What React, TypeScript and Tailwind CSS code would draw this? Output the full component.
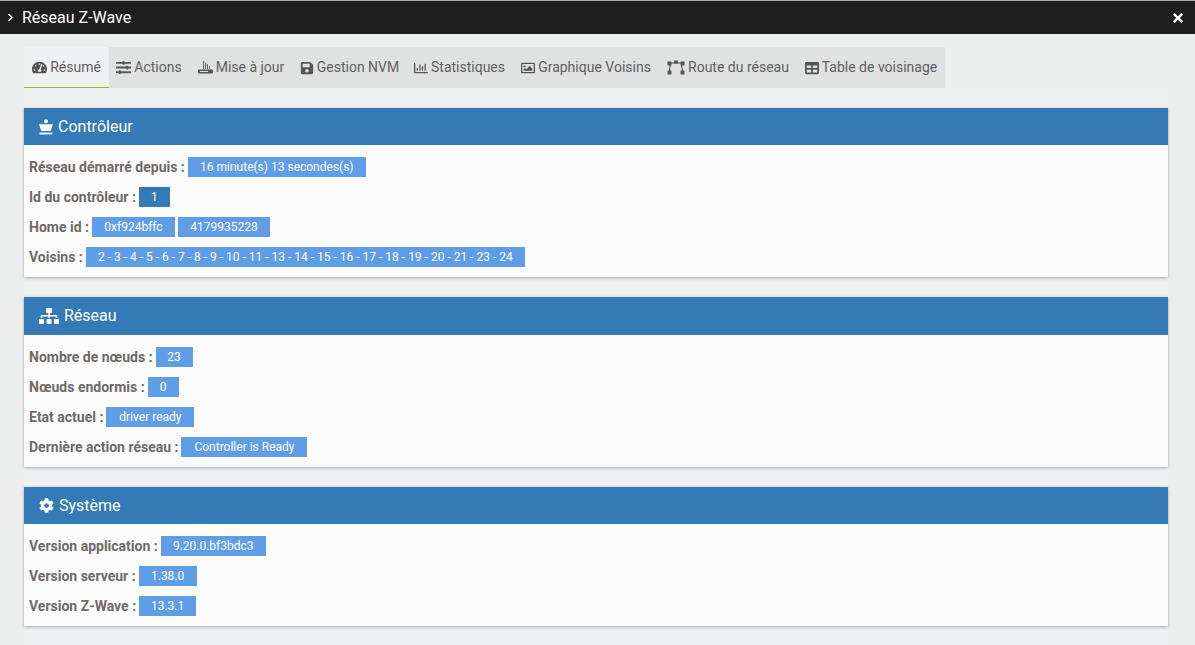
import { FaChevronRight, FaTimes, FaTachometerAlt, FaSlidersH, FaSave, FaRegChartBar, FaRegImage, FaTable, FaSitemap, FaCog } from 'react-icons/fa';

const RouterIcon = () => (
    <svg width="15" height="15" viewBox="0 0 15 15" className="text-[#555]" fill="currentColor">
        <rect x="0" y="9.5" width="15" height="4" rx="1" />
        <rect x="5" y="1" width="0.9" height="8" />
        <rect x="7" y="2.5" width="0.9" height="6.5" />
        <rect x="9" y="4" width="0.9" height="5" />
        <rect x="11" y="6" width="0.9" height="3" />
        <rect x="2" y="11" width="8" height="1" fill="#e0e2e2" />
    </svg>
);

const RouteIcon = () => (
    <svg width="18" height="15" viewBox="0 0 18 15" className="text-[#555]" fill="currentColor">
        <rect x="0.5" y="1.5" width="4" height="4" rx="0.5" />
        <rect x="7" y="0.5" width="4" height="3" rx="0.5" />
        <rect x="13.5" y="1.5" width="4" height="4" rx="0.5" />
        <rect x="0.5" y="10.5" width="4" height="4" rx="0.5" />
        <rect x="13.5" y="10.5" width="4" height="4" rx="0.5" />
        <path d="M3 5 L2.5 11 M4 3 H14 M14.5 5 L15.5 11" stroke="currentColor" strokeWidth="1.1" fill="none" />
    </svg>
);

const ChessIcon = () => (
    <svg width="14" height="16" viewBox="0 0 14 16" fill="white">
        <circle cx="7" cy="2.2" r="2" />
        <path d="M0 5.2 H14 L11.7 12 H2.3 Z" />
        <rect x="0.5" y="13.6" width="13" height="1.8" />
    </svg>
);

const tabs = [
    { label: 'Résumé', icon: <FaTachometerAlt className="text-[15px] text-[#555]" />, w: 'w-[85px]', active: true },
    { label: 'Actions', icon: <FaSlidersH className="text-[15px] text-[#555]" />, w: 'w-[80px]' },
    { label: 'Mise à jour', icon: <RouterIcon />, w: 'w-[104px]' },
    { label: 'Gestion NVM', icon: <FaSave className="text-[14px] text-[#555]" />, w: 'w-[113px]' },
    { label: 'Statistiques', icon: <FaRegChartBar className="text-[14px] text-[#555]" />, w: 'w-[107px]' },
    { label: 'Graphique Voisins', icon: <FaRegImage className="text-[14px] text-[#555]" />, w: 'w-[146px]' },
    { label: 'Route du réseau', icon: <RouteIcon />, w: 'w-[138px]' },
    { label: 'Table de voisinage', icon: <FaTable className="text-[14px] text-[#555]" />, w: 'w-[148px]' },
];

const Badge = ({ children, dark, w }: any) => (
    <span className={`inline-flex h-5 items-center justify-center text-[12px] text-white ${w} ${dark ? 'bg-[#337ab7]' : 'bg-[#5f9ee6]'}`}>
        {children}
    </span>
);

const Row = ({ label, gap, children }: any) => (
    <div className="flex h-5 items-center">
        <span className={`text-[14px] font-bold text-[#6f6a66] ${gap}`}>{label}</span>
        <div className="flex gap-[3px]">{children}</div>
    </div>
);

const Panel = ({ icon, title, h, body, children }: any) => (
    <div className="shadow-[0_1px_3px_rgba(0,0,0,0.3)]">
        <div className={`flex items-center gap-[5px] bg-[#337ab7] pl-[15px] text-[16px] text-white ${h}`}>
            {icon}
            <span>{title}</span>
        </div>
        <div className={`flex flex-col gap-[10px] bg-[#fbfbfb] pl-[5px] pt-[12px] ${body}`}>{children}</div>
    </div>
);

export default function App() {
    return (
        <div className="h-[645px] w-[1195px] overflow-hidden bg-[#eceeee] font-['Roboto',sans-serif]">
            {/* Title bar */}
            <div className="flex h-[34px] items-center justify-between border-t border-[#a8a8a8] bg-[#1e1e1e] pl-[6px] pr-[10px] text-white">
                <div className="flex items-center gap-[7px]">
                    <FaChevronRight className="text-[9px]" />
                    <span className="text-[16px]">Réseau Z-Wave</span>
                </div>
                <FaTimes className="text-[14px]" />
            </div>

            <div className="ml-6 mt-[13px] w-[1144px]">
                {/* Tabs */}
                <div className="flex h-[41px] w-fit bg-[#e0e2e2]">
                    {tabs.map((t) => (
                        <div
                            key={t.label}
                            className={`flex items-center justify-center gap-[3px] text-[14px] text-[#5f5f5f] ${t.w} ${t.active ? 'border-b border-[#93c01f] bg-[#eff0f2]' : ''}`}
                        >
                            {t.icon}
                            <span>{t.label}</span>
                        </div>
                    ))}
                </div>

                <div className="flex h-[600px] flex-col gap-5 bg-[#eff0f2] pt-5">
                    <Panel icon={<ChessIcon />} title="Contrôleur" h="h-[37px]" body="h-[132px]">
                        <Row label="Réseau démarré depuis :" gap="mr-[3px]">
                            <Badge w="w-[178px]">16 minute(s) 13 secondes(s)</Badge>
                        </Row>
                        <Row label="Id du contrôleur :" gap="mr-[3px]">
                            <Badge dark w="w-[31px]">1</Badge>
                        </Row>
                        <Row label="Home id :" gap="mr-[3px]">
                            <Badge w="w-[83px]">0xf924bffc</Badge>
                            <Badge w="w-[92px]">4179935228</Badge>
                        </Row>
                        <Row label="Voisins :" gap="mr-[3px]">
                            <Badge w="w-[439px]">2 - 3 - 4 - 5 - 6 - 7 - 8 - 9 - 10 - 11 - 13 - 14 - 15 - 16 - 17 - 18 - 19 - 20 - 21 - 23 - 24</Badge>
                        </Row>
                    </Panel>

                    <Panel icon={<FaSitemap className="text-[20px]" />} title="Réseau" h="h-[38px]" body="h-[132px]">
                        <Row label="Nombre de nœuds :" gap="mr-[3px]">
                            <Badge w="w-[37px]">23</Badge>
                        </Row>
                        <Row label="Nœuds endormis :" gap="mr-[3px]">
                            <Badge w="w-[31px]">0</Badge>
                        </Row>
                        <Row label="Etat actuel :" gap="mr-[3px]">
                            <Badge w="w-[88px]">driver ready</Badge>
                        </Row>
                        <Row label="Dernière action réseau :" gap="mr-[3px]">
                            <Badge w="w-[126px]">Controller is Ready</Badge>
                        </Row>
                    </Panel>

                    <Panel icon={<FaCog className="text-[15px]" />} title="Système" h="h-[37px]" body="h-[102px]">
                        <Row label="Version application :" gap="mr-[3px]">
                            <Badge w="w-[105px]">9.20.0.bf3bdc3</Badge>
                        </Row>
                        <Row label="Version serveur :" gap="mr-[3px]">
                            <Badge w="w-[58px]">1.38.0</Badge>
                        </Row>
                        <Row label="Version Z-Wave :" gap="mr-[3px]">
                            <Badge w="w-[57px]">13.3.1</Badge>
                        </Row>
                    </Panel>
                </div>
            </div>
        </div>
    );
}
